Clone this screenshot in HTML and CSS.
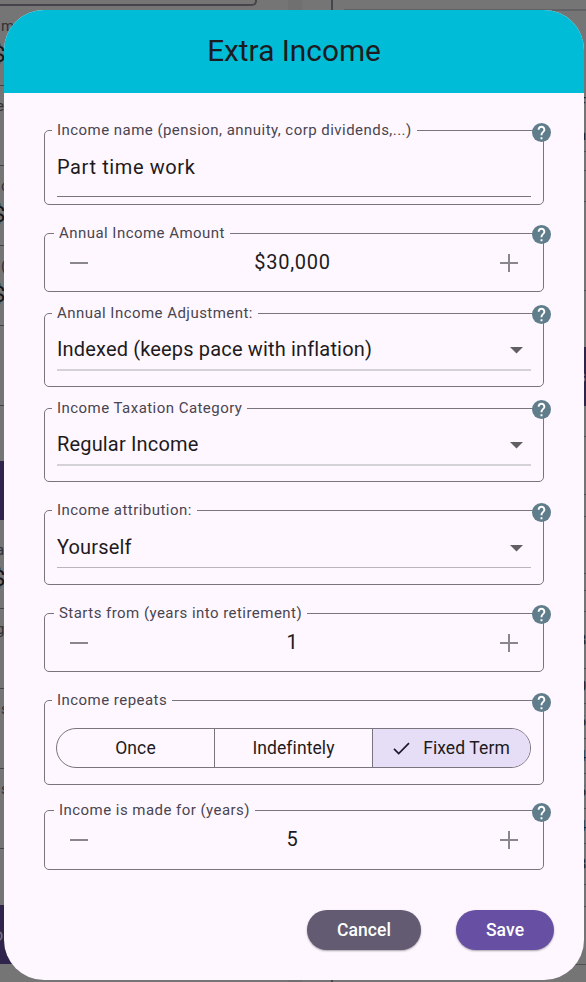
FILE: index.html
```html
<!DOCTYPE html>
<html lang="en">
<head>
<meta charset="UTF-8">
<meta name="viewport" content="width=device-width, initial-scale=1.0">
<title>Extra Income</title>
<link rel="stylesheet" href="styles.css">
</head>
<body>

<svg class="icon-defs">
    <symbol id="help" viewBox="2 2 20 20">
        <circle cx="12" cy="12" r="10" fill="#607d8b"/>
        <path fill="#fff" d="M13 19h-2v-2h2v2zm2.07-7.75l-.9.92C13.45 12.9 13 13.5 13 15h-2v-.5c0-1.1.45-2.1 1.17-2.83l1.24-1.26c.37-.36.59-.86.59-1.41 0-1.1-.9-2-2-2s-2 .9-2 2H8c0-2.21 1.79-4 4-4s4 1.79 4 4c0 .88-.36 1.68-.93 2.25z"/>
    </symbol>
    <symbol id="minus" viewBox="0 0 18 18"><path d="M0 9h18" stroke="#8a868d" stroke-width="2"/></symbol>
    <symbol id="plus" viewBox="0 0 18 18"><path d="M0 9h18M9 0v18" stroke="#8a868d" stroke-width="2"/></symbol>
    <symbol id="arrow" viewBox="0 0 13 7"><path d="M0 0h13L6.5 6.5z" fill="#625f63"/></symbol>
</svg>

<!-- page behind the dialog -->
<div class="page">
    <div class="column">
        <div class="row first"></div>
        <div class="row"><small>m</small><b>$</b></div>
        <div class="row"><small class="cut">e</small></div>
        <div class="row"><small>c</small><b>$</b></div>
        <div class="row"><small>(</small><b>$</b></div>
        <div class="row"></div>
        <div class="bar"></div>
        <div class="row short"><small class="cut">a</small><b>$</b></div>
        <div class="row"><small class="cut">g</small></div>
        <div class="row"><small>s</small></div>
        <div class="row"><small>s</small></div>
        <div class="bar last">o</div>
    </div>
    <div class="side">
        <div class="panel"></div>
        <div class="list">
            <div class="line tall" style="height: 141px"><span>F</span><span>n</span></div>
            <div class="line" style="height: 19px"></div>
            <div class="line" style="height: 31px"></div>
            <div class="line" style="height: 89px"></div>
            <div class="bar">s</div>
            <div class="line" style="height: 31px"></div>
            <div class="line" style="height: 58px"></div>
            <div class="line" style="height: 22px"></div>
            <div class="line" style="height: 57px"></div>
            <div class="line" style="height: 17px"></div>
            <div class="line" style="height: 21px"></div>
            <div class="line" style="height: 57px">8</div>
            <div class="line" style="height: 35px">0</div>
            <div class="line" style="height: 35px">6</div>
            <div class="line" style="height: 35px">4</div>
            <div class="line" style="height: 35px">6</div>
            <div class="line" style="height: 35px">4</div>
            <div class="line" style="height: 41px">8</div>
            <div class="line" style="height: 22px"></div>
            <div class="line" style="height: 58px"></div>
        </div>
    </div>
</div>

<div class="dialog">
    <h1>Extra Income</h1>
    <form>
        <div class="field name">
            <fieldset>
                <legend>Income name (pension, annuity, corp dividends,...)</legend>
                <div class="text-value">Part time work</div>
            </fieldset>
            <svg class="help"><use href="#help"/></svg>
        </div>

        <div class="field number">
            <fieldset>
                <legend>Annual Income Amount</legend>
                <div class="stepper">
                    <svg><use href="#minus"/></svg>
                    <span>$30,000</span>
                    <svg><use href="#plus"/></svg>
                </div>
            </fieldset>
            <svg class="help"><use href="#help"/></svg>
        </div>

        <div class="field choice">
            <fieldset>
                <legend>Annual Income Adjustment:</legend>
                <div class="dropdown">Indexed (keeps pace with inflation)<svg><use href="#arrow"/></svg></div>
            </fieldset>
            <svg class="help"><use href="#help"/></svg>
        </div>

        <div class="field choice">
            <fieldset>
                <legend>Income Taxation Category</legend>
                <div class="dropdown">Regular Income<svg><use href="#arrow"/></svg></div>
            </fieldset>
            <svg class="help"><use href="#help"/></svg>
        </div>

        <div class="field choice attribution">
            <fieldset>
                <legend>Income attribution:</legend>
                <div class="dropdown thin">Yourself<svg><use href="#arrow"/></svg></div>
            </fieldset>
            <svg class="help"><use href="#help"/></svg>
        </div>

        <div class="field number starts">
            <fieldset>
                <legend>Starts from (years into retirement)</legend>
                <div class="stepper">
                    <svg><use href="#minus"/></svg>
                    <span>1</span>
                    <svg><use href="#plus"/></svg>
                </div>
            </fieldset>
            <svg class="help"><use href="#help"/></svg>
        </div>

        <div class="field repeats">
            <fieldset>
                <legend>Income repeats</legend>
                <div class="segments">
                    <div class="segment">Once</div>
                    <div class="segment">Indefintely</div>
                    <div class="segment selected">
                        <svg viewBox="0 0 17 13"><path d="M1 6.8l4.7 4.7L16 1.2" fill="none" stroke="#1d192b" stroke-width="1.7"/></svg>
                        Fixed Term
                    </div>
                </div>
            </fieldset>
            <svg class="help"><use href="#help"/></svg>
        </div>

        <div class="field number years">
            <fieldset>
                <legend>Income is made for (years)</legend>
                <div class="stepper">
                    <svg><use href="#minus"/></svg>
                    <span>5</span>
                    <svg><use href="#plus"/></svg>
                </div>
            </fieldset>
            <svg class="help"><use href="#help"/></svg>
        </div>

        <div class="button-group">
            <button type="button" class="cancel">Cancel</button>
            <button type="button" class="save">Save</button>
        </div>
    </form>
</div>

</body>
</html>
```

FILE: styles.css
```css
* {
  box-sizing: border-box;
}

body {
  margin: 0;
  height: 982px;
  overflow: hidden;
  position: relative;
  font-family: Roboto, sans-serif;
  background-color: #757575;
  color: #1d1b20;
}

.icon-defs {
  position: absolute;
  width: 0;
  height: 0;
}

/* page behind the dialog */
.page {
  display: flex;
  justify-content: space-between;
  height: 982px;
}

.column {
  width: 257px;
}

.row {
  height: 80px;
  padding-top: 11px;
  border-bottom: 1px solid #45434a;
}

.row.first {
  height: 6px;
  padding: 0;
  border: 2px solid #47454b;
  border-width: 0 2px 2px 0;
  border-radius: 0 0 5px 0;
}

.row.short {
  height: 89px;
  padding-top: 21px;
}

.row small,
.row b {
  display: block;
  font-size: 15px;
  font-weight: 400;
  line-height: 18px;
  color: #323035;
}

.row small {
  margin-left: 1px;
}

.row small.cut {
  margin-left: -4px;
}

.row b {
  margin-top: 8px;
  margin-left: -7px;
  font-size: 22px;
  line-height: 24px;
  color: #141316;
}

.bar {
  width: 30px;
  height: 59px;
  margin-top: 55px;
  background-color: #30234c;
}

.bar.last {
  margin-top: 56px;
  margin-left: -7px;
  line-height: 59px;
  font-size: 18px;
  color: #777;
}

.side {
  display: flex;
  width: 298px;
}

.panel {
  width: 45px;
  border-left: 14px solid #707070;
  border-right: 2px solid #47454b;
}

.list {
  flex: 1;
}

.list::before {
  content: "";
  display: block;
  height: 9px;
  margin-left: 11px;
  border-bottom: 2px solid #626165;
}

.line {
  display: flex;
  justify-content: flex-end;
  align-items: center;
  border-bottom: 1px solid #505050;
  font-size: 14px;
}

.line.tall {
  flex-direction: column;
  justify-content: flex-end;
  align-items: flex-end;
  gap: 16px;
  padding-bottom: 8px;
}

.list .bar {
  width: auto;
  margin-top: 56px;
  line-height: 59px;
  text-align: right;
  color: #777;
}

/* dialog */
.dialog {
  position: absolute;
  top: 10px;
  left: 4px;
  width: 580px;
  height: 970px;
  border-radius: 40px;
  background-color: #fef7ff;
  overflow: hidden;
}

h1 {
  height: 83px;
  margin: 0;
  background-color: #00bcd7;
  font-size: 29.8px;
  font-weight: 400;
  line-height: 82px;
  text-align: center;
}

form {
  padding: 29px 40px 0;
}

.field {
  position: relative;
  margin-bottom: 20px;
}

fieldset {
  height: 100%;
  min-width: 0;
  margin: 0;
  padding: 0 12px;
  border: 1px solid #79747e;
  border-radius: 5px;
}

legend {
  height: 17px;
  margin-left: -5px;
  padding: 0 5px;
  font-size: 15px;
  line-height: 16px;
  letter-spacing: 0.46px;
  color: #49454f;
}

.help {
  position: absolute;
  top: 1px;
  right: -7px;
  width: 19px;
  height: 19px;
}

.name {
  height: 83px;
}

.text-value {
  height: 58px;
  padding-top: 16px;
  border-bottom: 1px solid #79747e;
  font-size: 20px;
  line-height: 24px;
  letter-spacing: 0.6px;
}

.number {
  height: 67px;
  margin-bottom: 13px;
}

.number .help,
.choice .help {
  top: 0;
}

.number legend {
  margin-left: -3px;
}

.stepper {
  display: flex;
  justify-content: space-between;
  align-items: center;
  height: 42px;
  padding: 0 13px;
  font-size: 20px;
  letter-spacing: 0.7px;
}

.stepper svg {
  width: 18px;
  height: 18px;
}

.stepper span {
  margin-top: -2px;
  margin-right: 3px;
}

.choice {
  height: 82px;
  margin-bottom: 13px;
}

.choice + .choice {
  margin-bottom: 20px;
}

.dropdown {
  display: flex;
  justify-content: space-between;
  align-items: center;
  height: 49px;
  padding: 6px 8px 0 0;
  border-bottom: 2px solid #d5d2d7;
  font-size: 20px;
  letter-spacing: 0.16px;
}

.dropdown.thin {
  padding-top: 7px;
  border-bottom: 1px solid #b9b5bb;
}

.dropdown svg {
  width: 13px;
  height: 7px;
  margin-top: 3px;
}

.attribution {
  height: 83px;
}

.attribution .help,
.years .help {
  top: 1px;
}

.starts {
  margin-bottom: 20px;
}

.repeats {
  height: 93px;
  margin-bottom: 17px;
}

.segments {
  display: flex;
  height: 40px;
  margin-top: 19px;
  margin-left: -1px;
  border: 1px solid #79747e;
  border-radius: 20px;
  overflow: hidden;
}

.segment {
  display: flex;
  flex: 1;
  justify-content: center;
  align-items: center;
  gap: 13px;
  border-right: 1px solid #79747e;
  font-size: 17.5px;
  letter-spacing: 0.1px;
}

.segment.selected {
  border-right: none;
  background-color: #e6ddf6;
}

.segment svg {
  width: 17px;
  height: 13px;
}

.years {
  height: 68px;
  margin-bottom: 40px;
}

.button-group {
  display: flex;
  justify-content: flex-end;
  gap: 35px;
  margin-right: -10px;
}

button {
  height: 40px;
  padding: 0;
  border: none;
  border-radius: 20px;
  color: #fff;
  font-family: inherit;
  font-size: 17.5px;
  font-weight: 500;
  letter-spacing: 0.1px;
  box-shadow: 0 1px 2px rgba(0, 0, 0, 0.35);
}

.cancel {
  width: 114px;
  background-color: #625b71;
}

.save {
  width: 98px;
  background-color: #6750a4;
}
```
